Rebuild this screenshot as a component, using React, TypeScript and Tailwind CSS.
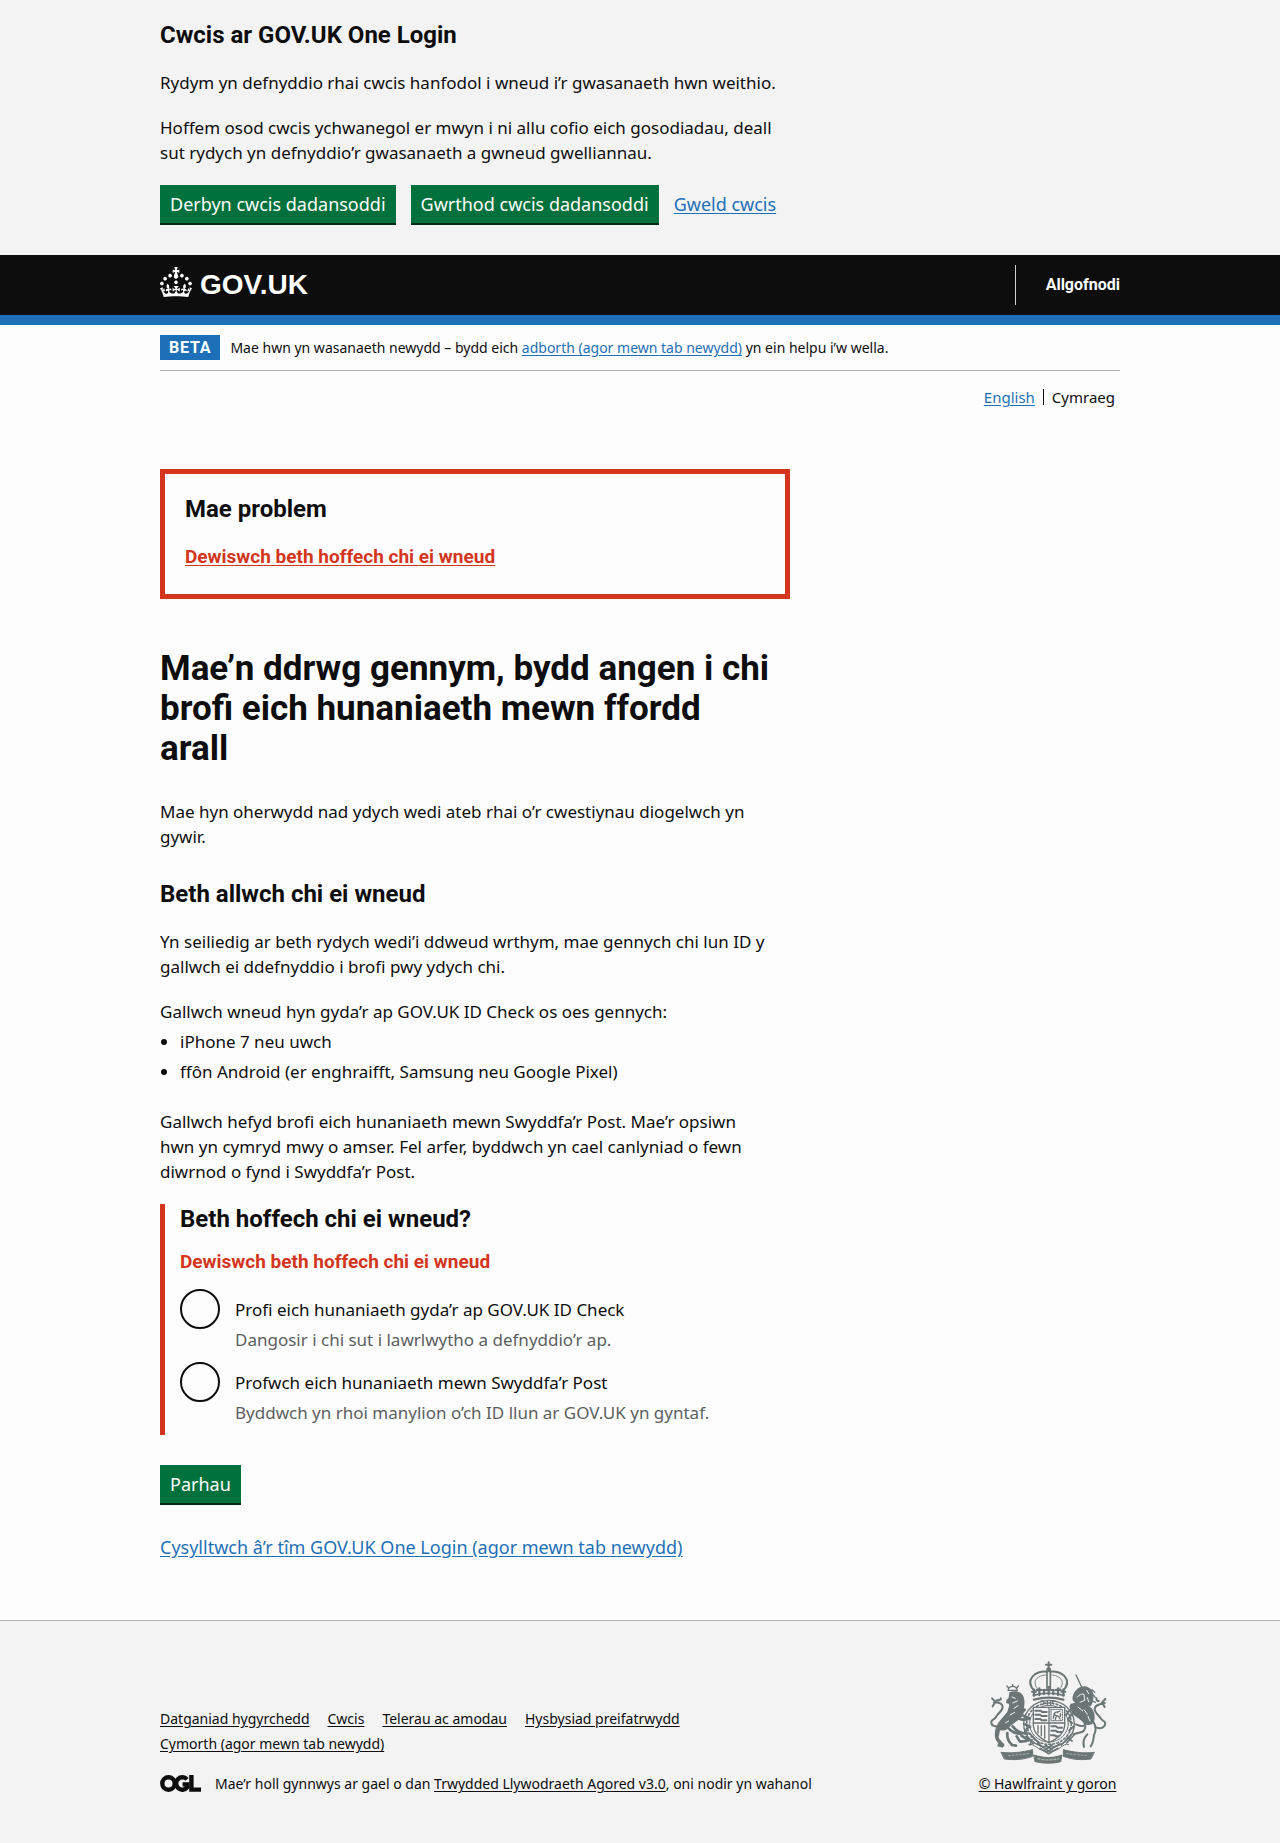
import type { ReactNode } from "react";

const link = "text-[#1d70b8] underline underline-offset-2";
const footerLink = "text-[#0d0d0d] underline underline-offset-2";
const heading = "font-['Roboto',sans-serif] text-[24px] leading-[30px] font-bold";
const errorText = "font-['Roboto',sans-serif] text-[19px] font-bold text-[#d4351c]";
const button =
  "bg-[#00703c] text-white text-[18px] leading-5 px-[10px] py-[9px] shadow-[0_2px_0_#002d18] cursor-pointer";

function Container({ children, className = "" }: { children: ReactNode; className?: string }) {
  return <div className={"mx-auto w-full max-w-[960px] " + className}>{children}</div>;
}

function Crown() {
  return (
    <svg viewBox="0 0 32 30" className="h-[30px] w-8 shrink-0" fill="currentColor" aria-hidden="true">
      <path d="M22.6 10.4c-1 .4-2-.1-2.4-1-.4-.9.1-2 1-2.4.9-.4 2 .1 2.4 1s-.1 2-1 2.4m-5.9 6.7c-.9.4-2-.1-2.4-1-.4-.9.1-2 1-2.4.9-.4 2 .1 2.4 1s-.1 2-1 2.4m10.8-3.7c-1 .4-2-.1-2.4-1-.4-.9.1-2 1-2.4.9-.4 2 .1 2.4 1s0 2-1 2.4m3.3 4.8c-1 .4-2-.1-2.4-1-.4-.9.1-2 1-2.4.9-.4 2 .1 2.4 1s-.1 2-1 2.4M17 4.7l2.3 1.2V2.5l-2.3.7-.2-.2.9-3h-3.4l.9 3-.2.2c-.1.1-2.3-.7-2.3-.7v3.4L15 4.7c.1.1.1.2.2.2l-1.3 4c-.1.2-.1.4-.1.6 0 1.1.8 2 1.9 2.2h.7c1-.2 1.9-1.1 1.9-2.1 0-.2 0-.4-.1-.6l-1.3-4c-.1-.2 0-.2.1-.3m-7.6 5.7c.9.4 2-.1 2.4-1 .4-.9-.1-2-1-2.4-.9-.4-2 .1-2.4 1s0 2 1 2.4m-5 3c.9.4 2-.1 2.4-1 .4-.9-.1-2-1-2.4-.9-.4-2 .1-2.4 1s.1 2 1 2.4m-3.2 4.8c.9.4 2-.1 2.4-1 .4-.9-.1-2-1-2.4-.9-.4-2 .1-2.4 1s0 2 1 2.4m14.8 11c4.4 0 8.6.3 12.3.8 1.1-4.5 2.4-7 3.7-8.8l-2.5-.9c.2 1.3.3 1.9 0 2.7-.4-.4-.8-1.1-1.1-2.3l-1.2 4c.7-.5 1.3-.8 2-.9-1.1 2.5-2.6 3.1-3.5 3-1.1-.2-1.7-1.2-1.5-2.1.3-1.2 1.5-1.5 2.1-.1 1.1-2.3-.8-3-2-2.3 1.9-1.9 2.1-3.5.6-5.6-2.1 1.6-2.1 3.2-1.2 5.5-1.2-1.4-3.2-.6-2.5 1.6.9-1.4 2.1-.5 1.9.8-.2 1.1-1.7 2.1-3.5 1.9-2.7-.2-2.9-2.1-2.9-3.6.7-.1 1.9.5 2.9 1.9l.4-4.3c-1.1 1.1-2.1 1.4-3.2 1.4.4-1.2 2.1-3 2.1-3h-5.4s1.7 1.9 2.1 3c-1.1 0-2.1-.2-3.2-1.4l.4 4.3c1-1.4 2.2-2 2.9-1.9-.1 1.5-.2 3.4-2.9 3.6-1.9.2-3.4-.8-3.5-1.9-.2-1.3 1-2.2 1.9-.8.7-2.3-1.2-3-2.5-1.6.9-2.2.9-3.9-1.2-5.5-1.5 2-1.3 3.7.6 5.6-1.2-.7-3.1 0-2 2.3.6-1.4 1.8-1.1 2.1.1.2.9-.3 1.9-1.5 2.1-.9.2-2.4-.5-3.5-3 .6 0 1.2.3 2 .9l-1.2-4c-.3 1.1-.7 1.9-1.1 2.3-.3-.8-.2-1.4 0-2.7l-2.9.9C1.3 23 2.6 25.5 3.7 30c3.7-.5 7.9-.8 12.3-.8" />
    </svg>
  );
}

function RoyalArms() {
  return (
    <svg viewBox="105 60 375 309" className="h-[103px] w-[125px]" aria-hidden="true" fill="none" stroke="#6b7674" strokeLinecap="round" strokeLinejoin="round">
      {/* crown */}
      <g strokeWidth="5">
        <path d="M296 64v16M288 71h16" strokeWidth="6" />
        <circle cx="296" cy="86" r="5" fill="#6b7674" />
        <path d="M254 150c-14-14-18-30-6-44 10-11 28-17 43-14M338 150c14-14 18-30 6-44-10-11-28-17-43-14" strokeWidth="6" />
        <path d="M263 144c-10-12-10-24-2-32 8-7 18-10 27-10M329 144c10-12 10-24 2-32-8-7-18-10-27-10" strokeWidth="3" strokeDasharray="3 3" />
        <path d="M291 92v50M301 92v50" strokeWidth="5" />
        <path d="M252 176c28-8 60-8 88 0" strokeWidth="7" />
        <path d="M250 163c30-8 62-8 92 0" strokeWidth="5" />
        <path d="M252 146v18M268 142v20M282 147v12M296 138v22M310 147v12M324 142v20M340 146v18" strokeWidth="7" />
        <path d="M246 152h12M260 147h16M286 147h20M316 147h16M334 152h12" strokeWidth="6" />
      </g>
      {/* garter */}
      <ellipse cx="297" cy="248" rx="76" ry="70" strokeWidth="4" />
      <ellipse cx="297" cy="248" rx="67" ry="62" strokeWidth="5" strokeDasharray="5 7" />
      <ellipse cx="297" cy="248" rx="58" ry="55" strokeWidth="3" />
      <path d="M272 181c8-5 14 6 6 10M292 179v14M302 179v14M314 181c-6-3-9 4-4 8" strokeWidth="4" />
      {/* shield */}
      <path d="M250 199h94v52c0 26-22 42-47 54-25-12-47-28-47-54z" fill="#f3f3f3" strokeWidth="4" />
      <path d="M297 199v106M250 246h94" strokeWidth="4" />
      <path d="M256 209h16l4 4h14M256 221h14l5 4h15M256 234h15l4 4h14" strokeWidth="6" />
      <path d="M303 205h34v34h-34z" strokeWidth="3" strokeDasharray="4 3" />
      <path d="M310 232c2-8 0-14 6-18l10-2M314 222l12 4 4 8M322 214l8-4M318 228l-2 8M331 218v8" strokeWidth="4" />
      <path d="M264 254v22M274 254v30M284 254v38" strokeWidth="4" />
      <path d="M304 256h14l5 4h13M304 269h14l4 4h12M303 283h11l4 3h8" strokeWidth="6" />
      {/* lion */}
      <path d="M174 148c2-9 8-12 14-12s12 3 14 12zM188 130v6M176 141l-5-6M200 141l5-6" strokeWidth="4" />
      <path d="M178 154c14-6 32-4 40 8 7 12 6 26 4 38 2 14-4 28-16 36-10 8-22 16-30 24-8 9-16 10-26 8l-4 20c2 10 12 14 18 24l-6 8-16-4 2-10-8-12c-4-18 0-36 10-50 8-12 18-20 26-32 2-10 8-16 4-24l-8-2 2-10 6-6z" fill="#6b7674" stroke="none" />
      <path d="M152 254c-16 6-30 0-28-12 2-8 10-6 14-14 6-12 20-18 20-30 0-10-12-14-26-14M126 172l10 10-8 14M140 178c8 0 14-2 12-6" strokeWidth="6" />
      <path d="M196 214c14 4 22 0 28-8M206 232c10 6 22 4 30 2M220 224l18 8M176 262c10 12 22 16 36 16M188 256c12 16 28 22 44 22M172 276c-2 16 4 26 14 36l12 2M200 286l10 16 20-2M214 284l22 14M232 262l-8 14M226 250l14 8" strokeWidth="8" />
      <path d="M186 168l10 4M188 186l14-6M192 202l12-8M180 222l14-8M166 246l10-6" stroke="#f3f3f3" strokeWidth="3" />
      {/* unicorn */}
      <path d="M378 102l18 38" strokeWidth="4" />
      <path d="M368 178c-2-10 2-22 10-30 6-8 16-12 26-12 14 2 26 12 26 26 2 12-2 26-8 34l-18-4-26-4z" fill="#6b7674" stroke="none" />
      <path d="M382 168c6-8 14-10 20-8l2 18-14 6M410 148l6 10M412 170l4 12" stroke="#f3f3f3" strokeWidth="3" />
      <path d="M426 146l8 8M430 162l6 8M428 180l8 4" strokeWidth="4" />
      <path d="M362 188c20-4 40-4 54 6 16 10 22 30 16 50-6 10-22 10-30 4-10-14-26-20-36-32l-8-20z" fill="#6b7674" stroke="none" />
      <path d="M384 198l14 12M402 206l10 14M414 226l6 14" stroke="#f3f3f3" strokeWidth="3" />
      <path d="M436 258c14 8 28 2 30-10 0-8-8-8-12-14-6-10-20-18-20-30 0-10 10-14 30-18M466 174l-10 10 8 14M446 180c-6 0-8-4-6-8" strokeWidth="6" />
      <path d="M362 204l-14 18M366 218l-12 18 12 10M404 246c4 12 2 20-6 26l-28 8M372 256l-14 12M432 246c8 16 6 26 0 36-2 14-2 24-10 34M412 280c-10 10-14 24-10 38M378 250c8 4 14 6 22 4" strokeWidth="6" />
      {/* compartment */}
      <path d="M228 286l22 22M240 278l30 32M350 306l22-24M334 312l28-30M262 308l34 22 34-22M270 322l26 16 28-16M246 296l-6 16M352 290l14 10M286 312l20 14M306 312l-20 14" strokeWidth="5" />
      <path d="M236 310c20-4 24 20 60 22 36-2 40-26 60-22" strokeWidth="3" />
      {/* motto ribbon */}
      <path d="M154 334c32 4 60 0 94-8v20c-28 10-56 12-84 8zM432 334c-32 4-60 0-92-8v20c28 10 54 12 82 8z" fill="#6b7674" strokeWidth="3" />
      <path d="M176 344l60-6M350 338l62 6" stroke="#a9b0ae" strokeWidth="3" strokeDasharray="5 6" />
      <path d="M252 342c28 10 58 10 84 0l-4 20c-24 6-50 6-76 0z" fill="#6b7674" strokeWidth="3" />
      <path d="M264 353c20 5 40 5 62 0" stroke="#a9b0ae" strokeWidth="4" strokeDasharray="6 6" />
    </svg>
  );
}

function OglLogo() {
  return (
    <svg viewBox="0 0 41 17" className="h-[17px] w-[41px] shrink-0" fill="none" stroke="#0d0d0d" strokeWidth="4.4" aria-hidden="true">
      <circle cx="8.5" cy="8.5" r="6.2" />
      <path d="M27 4.4A6.2 6.2 0 1 0 27.2 12.4V9.4H22.6" />
      <path d="M31.4 0V14.6H41" />
    </svg>
  );
}

function RadioOption({ id, label, hint }: { id: string; label: string; hint: string }) {
  return (
    <div className="flex gap-[15px]">
      <input
        type="radio"
        name="nextStep"
        id={id}
        aria-describedby={id + "-hint"}
        className="size-10 shrink-0 appearance-none rounded-full border-2 border-[#0d0d0d] checked:shadow-[inset_0_0_0_8px_white] checked:bg-[#0d0d0d]"
      />
      <div className="pt-2">
        <label htmlFor={id} className="block">{label}</label>
        <p id={id + "-hint"} className="mt-[5px] text-[#5c5f60]">{hint}</p>
      </div>
    </div>
  );
}

export default function App() {
  return (
    <div className="bg-[#f3f3f3] font-['Noto_Sans',sans-serif] text-[17px] leading-[25px] text-[#0d0d0d]">
      <section aria-label="Cwcis ar GOV.UK One Login" className="pt-5 pb-[30px]">
        <Container>
          <div className="max-w-[630px]">
            <h2 className={heading}>Cwcis ar GOV.UK One Login</h2>
            <p className="mt-5">Rydym yn defnyddio rhai cwcis hanfodol i wneud i’r gwasanaeth hwn weithio.</p>
            <p className="mt-5">
              Hoffem osod cwcis ychwanegol er mwyn i ni allu cofio eich gosodiadau, deall sut rydych yn defnyddio’r
              gwasanaeth a gwneud gwelliannau.
            </p>
          </div>
          <div className="mt-5 mb-[2px] flex flex-wrap items-center gap-x-[15px] gap-y-4">
            <button type="button" className={button}>Derbyn cwcis dadansoddi</button>
            <button type="button" className={button}>Gwrthod cwcis dadansoddi</button>
            <a href="#cwcis" className={link + " text-[18px]"}>Gweld cwcis</a>
          </div>
        </Container>
      </section>

      <header className="border-b-10 border-[#1d70b8] bg-[#0d0d0d] text-white">
        <Container className="flex h-[60px] items-center justify-between">
          <a href="#govuk" className="flex items-center gap-2 pb-[6px] font-['Liberation_Sans',sans-serif] text-[28px] leading-[30px] font-bold">
            <Crown />
            <span className="pt-[6px]">GOV.UK</span>
          </a>
          <nav className="flex h-10 items-center border-l border-white/80 pl-[30px]">
            <a href="#allgofnodi" className="font-['Roboto',sans-serif] text-[16px] leading-5 font-bold">Allgofnodi</a>
          </nav>
        </Container>
      </header>

      <div className="bg-[#fdfdfd] pb-[60px]">
        <Container>
          <div className="flex items-center gap-[10px] border-b border-[#b1b4b6] py-[10px] text-[14px]">
            <strong className="bg-[#1d70b8] px-[9px] font-['Roboto',sans-serif] text-[16px] tracking-wider text-white">BETA</strong>
            <p>
              Mae hwn yn wasanaeth newydd – bydd eich{" "}
              <a href="#adborth" className={link}>adborth (agor mewn tab newydd)</a> yn ein helpu i’w wella.
            </p>
          </div>
          <nav aria-label="Dewis iaith" className="mt-4 flex items-center justify-end gap-2 pr-[5px] text-[15px] leading-5">
            <a href="#english" lang="en" className={link}>English</a>
            <span className="h-4 border-l border-[#0d0d0d]" />
            <span>Cymraeg</span>
          </nav>

          <main className="mt-[62px] max-w-[630px]">
            <section aria-labelledby="problem" className="border-5 border-[#d4351c] px-5 pt-5 pb-[25px]">
              <h2 id="problem" className={heading}>Mae problem</h2>
              <p className="mt-5">
                <a href="#ap" className={errorText + " underline underline-offset-2"}>Dewiswch beth hoffech chi ei wneud</a>
              </p>
            </section>

            <h1 className="mt-[50px] max-w-[615px] font-['Roboto',sans-serif] text-[35px] leading-10 font-bold">
              Mae’n ddrwg gennym, bydd angen i chi brofi eich hunaniaeth mewn ffordd arall
            </h1>
            <p className="mt-[30px]">Mae hyn oherwydd nad ydych wedi ateb rhai o’r cwestiynau diogelwch yn gywir.</p>

            <h2 className={heading + " mt-[30px]"}>Beth allwch chi ei wneud</h2>
            <p className="mt-5">
              Yn seiliedig ar beth rydych wedi’i ddweud wrthym, mae gennych chi lun ID y gallwch ei ddefnyddio i brofi
              pwy ydych chi.
            </p>
            <p className="mt-5">Gallwch wneud hyn gyda’r ap GOV.UK ID Check os oes gennych:</p>
            <ul className="mt-[5px] list-disc space-y-[5px] pl-5">
              <li>iPhone 7 neu uwch</li>
              <li>ffôn Android (er enghraifft, Samsung neu Google Pixel)</li>
            </ul>
            <p className="mt-[25px] max-w-[605px]">
              Gallwch hefyd brofi eich hunaniaeth mewn Swyddfa’r Post. Mae’r opsiwn hwn yn cymryd mwy o amser. Fel
              arfer, byddwch yn cael canlyniad o fewn diwrnod o fynd i Swyddfa’r Post.
            </p>

            <form onSubmit={(e) => e.preventDefault()} className="mt-5">
              <fieldset className="border-l-5 border-[#d4351c] pb-[10px] pl-[15px]">
                <legend className="contents">
                  <span className={heading + " block"}>Beth hoffech chi ei wneud?</span>
                </legend>
                <p className={errorText + " mt-[15px] mb-[15px]"}>Dewiswch beth hoffech chi ei wneud</p>
                <div className="space-y-[10px]">
                  <RadioOption id="ap" label="Profi eich hunaniaeth gyda’r ap GOV.UK ID Check" hint="Dangosir i chi sut i lawrlwytho a defnyddio’r ap." />
                  <RadioOption id="post" label="Profwch eich hunaniaeth mewn Swyddfa’r Post" hint="Byddwch yn rhoi manylion o’ch ID llun ar GOV.UK yn gyntaf." />
                </div>
              </fieldset>
              <button type="submit" className={button + " mt-[30px]"}>Parhau</button>
            </form>
            <p className="mt-8 text-[18px]">
              <a href="#cysylltu" className={link}>Cysylltwch â’r tîm GOV.UK One Login (agor mewn tab newydd)</a>
            </p>
          </main>
        </Container>
      </div>

      <footer className="border-t border-[#b1b4b6] pt-10 pb-12 text-[14px]">
        <Container className="flex items-end justify-between">
          <div className="max-w-[700px]">
            <ul className="flex max-w-[600px] flex-wrap gap-x-[18px]">
              <li><a href="#hygyrchedd" className={footerLink}>Datganiad hygyrchedd</a></li>
              <li><a href="#cwcis" className={footerLink}>Cwcis</a></li>
              <li><a href="#telerau" className={footerLink}>Telerau ac amodau</a></li>
              <li><a href="#preifatrwydd" className={footerLink}>Hysbysiad preifatrwydd</a></li>
              <li><a href="#cymorth" className={footerLink}>Cymorth (agor mewn tab newydd)</a></li>
            </ul>
            <div className="mt-[15px] flex items-center gap-[14px]">
              <OglLogo />
              <p>
                Mae’r holl gynnwys ar gael o dan{" "}
                <a href="#ogl" className={footerLink}>Trwydded Llywodraeth Agored v3.0</a>, oni nodir yn wahanol
              </p>
            </div>
          </div>
          <a href="#hawlfraint" className={footerLink + " flex w-[145px] flex-col items-center gap-[7px]"}>
            <RoyalArms />
            <span className="whitespace-nowrap">© Hawlfraint y goron</span>
          </a>
        </Container>
      </footer>
    </div>
  );
}
